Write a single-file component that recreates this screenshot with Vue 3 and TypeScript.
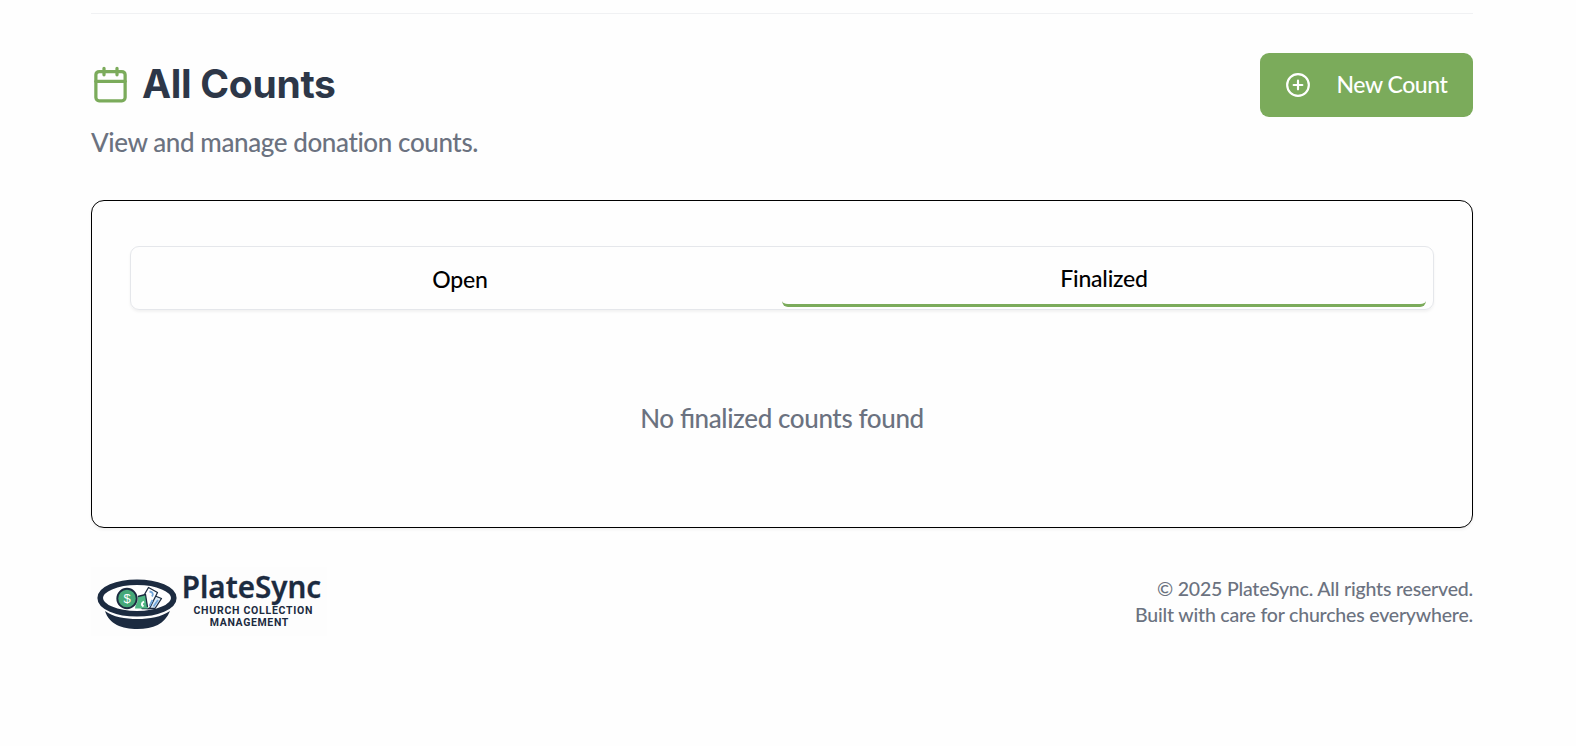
<script setup lang="ts">
import { ref } from 'vue'

type TabId = 'open' | 'finalized'

const tabs: { id: TabId; label: string }[] = [
  { id: 'open', label: 'Open' },
  { id: 'finalized', label: 'Finalized' },
]
const active = ref<TabId>('finalized')
</script>

<template>
  <div class="page">
    <header class="head">
      <div>
        <div class="title-row">
          <svg class="calendar" viewBox="0 0 24 24" fill="none" stroke="currentColor" stroke-width="2" stroke-linecap="round" stroke-linejoin="round">
            <path d="M8 2v4M16 2v4" />
            <rect x="3" y="4" width="18" height="18" rx="2" />
            <path d="M3 10h18" />
          </svg>
          <h1>All Counts</h1>
        </div>
        <p class="subtitle">View and manage donation counts.</p>
      </div>
      <button class="new-count" type="button">
        <svg class="plus" viewBox="0 0 24 24" fill="none" stroke="currentColor" stroke-width="2" stroke-linecap="round" stroke-linejoin="round">
          <circle cx="12" cy="12" r="10" />
          <path d="M8 12h8M12 8v8" />
        </svg>
        <span>New Count</span>
      </button>
    </header>

    <main class="card">
      <div class="tabs" role="tablist">
        <button
          v-for="tab in tabs"
          :key="tab.id"
          type="button"
          role="tab"
          class="tab"
          :class="{ active: tab.id === active }"
          :aria-selected="tab.id === active"
          @click="active = tab.id"
        >
          {{ tab.label }}
        </button>
      </div>
      <p class="empty">No {{ active }} counts found</p>
    </main>

    <footer class="foot">
      <svg class="logo" viewBox="0 0 240 70" role="img" aria-label="PlateSync">
        <rect width="236" height="69" fill="#fdfdfd" />
        <g>
          <path d="M14 44C18 57 31 62 46.500 62S74 57 79 44C70 50 59 52 46.500 52S22 50 14 44Z" fill="#1c2b40" />
          <ellipse cx="46" cy="31" rx="36.800" ry="15.800" fill="#fff" stroke="#1c2b40" stroke-width="5.600" />
          <g stroke="#1c2b40" stroke-width="1.300" stroke-linejoin="round">
            <path d="M63 28.500L70.500 31.500 64 41.500H56Z" fill="#dcebf8" />
            <path d="M54 26.500L57.500 20.500 66.500 25.500 58.500 41.500H51Z" fill="#fff" />
            <path d="M46 29.500L54.500 27.500 57 41.500H44Z" fill="#4fb783" stroke="none" />
            <path d="M47 29.500L54.500 27.500 56.500 40" fill="none" />
          </g>
          <path d="M58.500 24.500Q63.500 25.500 61 29.500M61.500 33L58.500 39M67 33L62.500 39.500" fill="none" stroke="#73a7db" stroke-width="1.800" />
          <path d="M53 34.500Q49 37 52.500 39.500" fill="none" stroke="#fff" stroke-width="2" />
          <circle cx="36" cy="31.500" r="10.800" fill="#fff" />
          <circle cx="36" cy="31.500" r="9.700" fill="#45a878" stroke="#1c2b40" stroke-width="1.900" />
          <text class="dollar" x="36" y="36" text-anchor="middle">$</text>
        </g>
        <text class="brand" x="90.800" y="30.800" textLength="139.300" lengthAdjust="spacingAndGlyphs">PlateSync</text>
        <text class="tagline" x="102.500" y="47" textLength="119" lengthAdjust="spacing">CHURCH COLLECTION</text>
        <text class="tagline" x="118.800" y="58.800" textLength="78.500" lengthAdjust="spacing">MANAGEMENT</text>
      </svg>
      <p class="legal">© 2025 PlateSync. All rights reserved.<br />Built with care for churches everywhere.</p>
    </footer>
  </div>
</template>

<style>
body {
  background: #fefefe;
}
</style>

<style scoped>
.page {
  box-sizing: border-box;
  height: 746px;
  padding: 13px 103px 0 91px;
  font-family: Lato, 'Liberation Sans', sans-serif;
  font-weight: 500;
  color: #6b7280;
}
h1, p {
  margin: 0;
}
.head {
  display: flex;
  justify-content: space-between;
  align-items: flex-start;
  height: 186px;
  border-top: 1px solid #f0f1f3;
}
.title-row {
  display: flex;
  align-items: center;
  gap: 12px;
  height: 64px;
  margin-top: 38px;
}
.calendar {
  width: 39px;
  height: 39px;
  color: #7bab5b;
}
h1 {
  font: 700 39px/64px Inter, sans-serif;
  letter-spacing: -0.3px;
  color: #2d3748;
}
.subtitle {
  margin-top: 10px;
  font-size: 26px;
  line-height: 32px;
  letter-spacing: -0.4px;
}
.new-count {
  display: flex;
  align-items: center;
  gap: 25.500px;
  box-sizing: border-box;
  width: 213px;
  height: 64px;
  margin-top: 39px;
  padding: 0 25px;
  border: 0;
  border-radius: 9px;
  background: #7bab5b;
  color: #fff;
  font: 500 23px/32px Lato, sans-serif;
  letter-spacing: -0.45px;
  white-space: nowrap;
}
.new-count span {
  padding-bottom: 2px;
}
.plus {
  flex: none;
  width: 26px;
  height: 26px;
}
.card {
  box-sizing: border-box;
  height: 328px;
  padding: 45px 38px 0;
  border: 1px solid #000;
  border-radius: 13px;
  background: #fefefe;
  box-shadow: 0 2px 3px rgb(0 0 0 / 5%);
}
.tabs {
  display: grid;
  grid-template-columns: 1fr 1fr;
  box-sizing: border-box;
  height: 64px;
  padding: 7px 7px 2px;
  border: 1px solid #e5e7eb;
  border-radius: 9px;
  box-shadow: 0 2px 3px rgb(0 0 0 / 5%);
}
.tab {
  padding: 0 0 3px;
  border: 0;
  border-radius: 6px;
  background: none;
  color: #000;
  font: 500 23px/32px Lato, sans-serif;
  letter-spacing: -0.2px;
}
.tab.active {
  padding-bottom: 2px;
  border-bottom: 3px solid #7bab5b;
}
.empty {
  margin-top: 92px;
  text-align: center;
  font-size: 26px;
  line-height: 32px;
  letter-spacing: -0.39px;
  font-feature-settings: 'liga' 1;
}
.foot {
  display: flex;
  justify-content: space-between;
  align-items: flex-start;
  padding-top: 39px;
}
.logo {
  width: 240px;
  height: 70px;
  overflow: visible;
}
.brand {
  font: 600 30px 'Noto Sans', sans-serif;
  fill: #1c2b40;
  stroke: #1c2b40;
  stroke-width: 0.3px;
}
.tagline {
  font: 700 10.500px Roboto, sans-serif;
  fill: #1c2b40;
}
.dollar {
  font: 400 13px 'Liberation Sans', sans-serif;
  fill: #fff;
}
.legal {
  margin-top: 9px;
  text-align: right;
  font-size: 19.500px;
  line-height: 26px;
  letter-spacing: -0.19px;
}
</style>
